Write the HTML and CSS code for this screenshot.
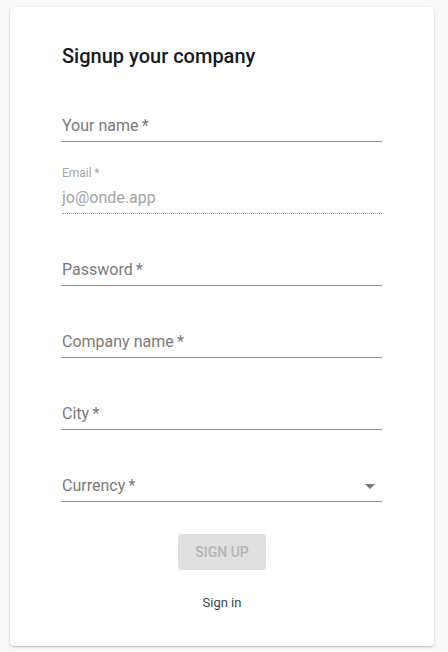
FILE: index.html
```html
<!DOCTYPE html>
<html>
<head>
	<title>Signup</title>
	<link rel="stylesheet" href="styles.css">
</head>
<body>
	<div class="_card">
		<h1 class="_title">Signup your company</h1>
		<div class="_form">
			<div class="_field">
				<p class="_placeholder">Your name&thinsp;*</p>
			</div>
			<div class="_field _disabled">
				<p class="_label">Email&thinsp;*</p>
				<p class="_value">jo@onde.app</p>
			</div>
			<div class="_field">
				<p class="_placeholder">Password&thinsp;*</p>
			</div>
			<div class="_field">
				<p class="_placeholder">Company name&thinsp;*</p>
			</div>
			<div class="_field">
				<p class="_placeholder">City&thinsp;*</p>
			</div>
			<div class="_field _select">
				<p class="_placeholder">Currency&thinsp;*</p>
				<svg class="_arrow" width="24" height="24" viewBox="0 0 24 24"><path d="M7 10l5 5 5-5z" fill="#757575"/></svg>
			</div>
		</div>
		<div class="_actions">
			<div class="_button">Sign up</div>
			<p class="_link">Sign in</p>
		</div>
	</div>
</body>
</html>
```

FILE: styles.css
```css
html, body {
	margin: 0;
	background: #f8f8f8;
	font-family: Roboto, "Liberation Sans", sans-serif;
}

body {
	padding: 7px 14px 6px 10px;
}

._card {
	width: 424px;
	height: 639px;
	box-sizing: border-box;
	padding: 0 52px;
	background: #fff;
	border-radius: 4px;
	box-shadow: 0 1px 3px rgba(0, 0, 0, 0.18), 0 1px 1px rgba(0, 0, 0, 0.08);
}

._title {
	margin: 0;
	padding-top: 37px;
	font-size: 20px;
	line-height: 24px;
	font-weight: 500;
	color: #161a22;
}

._form {
	display: flex;
	flex-direction: column;
	gap: 24px;
	margin-top: 26px;
}

._field {
	position: relative;
	height: 48px;
	box-sizing: border-box;
	display: flex;
	flex-direction: column;
	justify-content: flex-end;
	border-bottom: 1px solid #949494;
	padding-bottom: 6px;
}

._field p {
	margin: 0;
}

._placeholder {
	font-size: 16px;
	line-height: 19px;
	color: #7a7a7a;
}

._disabled {
	border-bottom: 1px dotted #a0a0a0;
	justify-content: space-between;
}

._disabled ._label {
	font-size: 12px;
	line-height: 14px;
	color: #a6a6a6;
}

._disabled ._value {
	font-size: 16px;
	line-height: 19px;
	color: #a3a3a3;
}

._select ._arrow {
	position: absolute;
	right: 0;
	top: 20px;
}

._actions {
	display: flex;
	flex-direction: column;
	align-items: center;
	margin-top: 32px;
}

._button {
	width: 88px;
	height: 36px;
	border-radius: 4px;
	background: #e0e0e0;
	color: #b3b3b3;
	font-size: 14px;
	font-weight: 500;
	text-transform: uppercase;
	display: flex;
	align-items: center;
	justify-content: center;
}

._link {
	margin: 25px 0 0;
	font-size: 13px;
	line-height: 16px;
	color: #37474f;
}
```
